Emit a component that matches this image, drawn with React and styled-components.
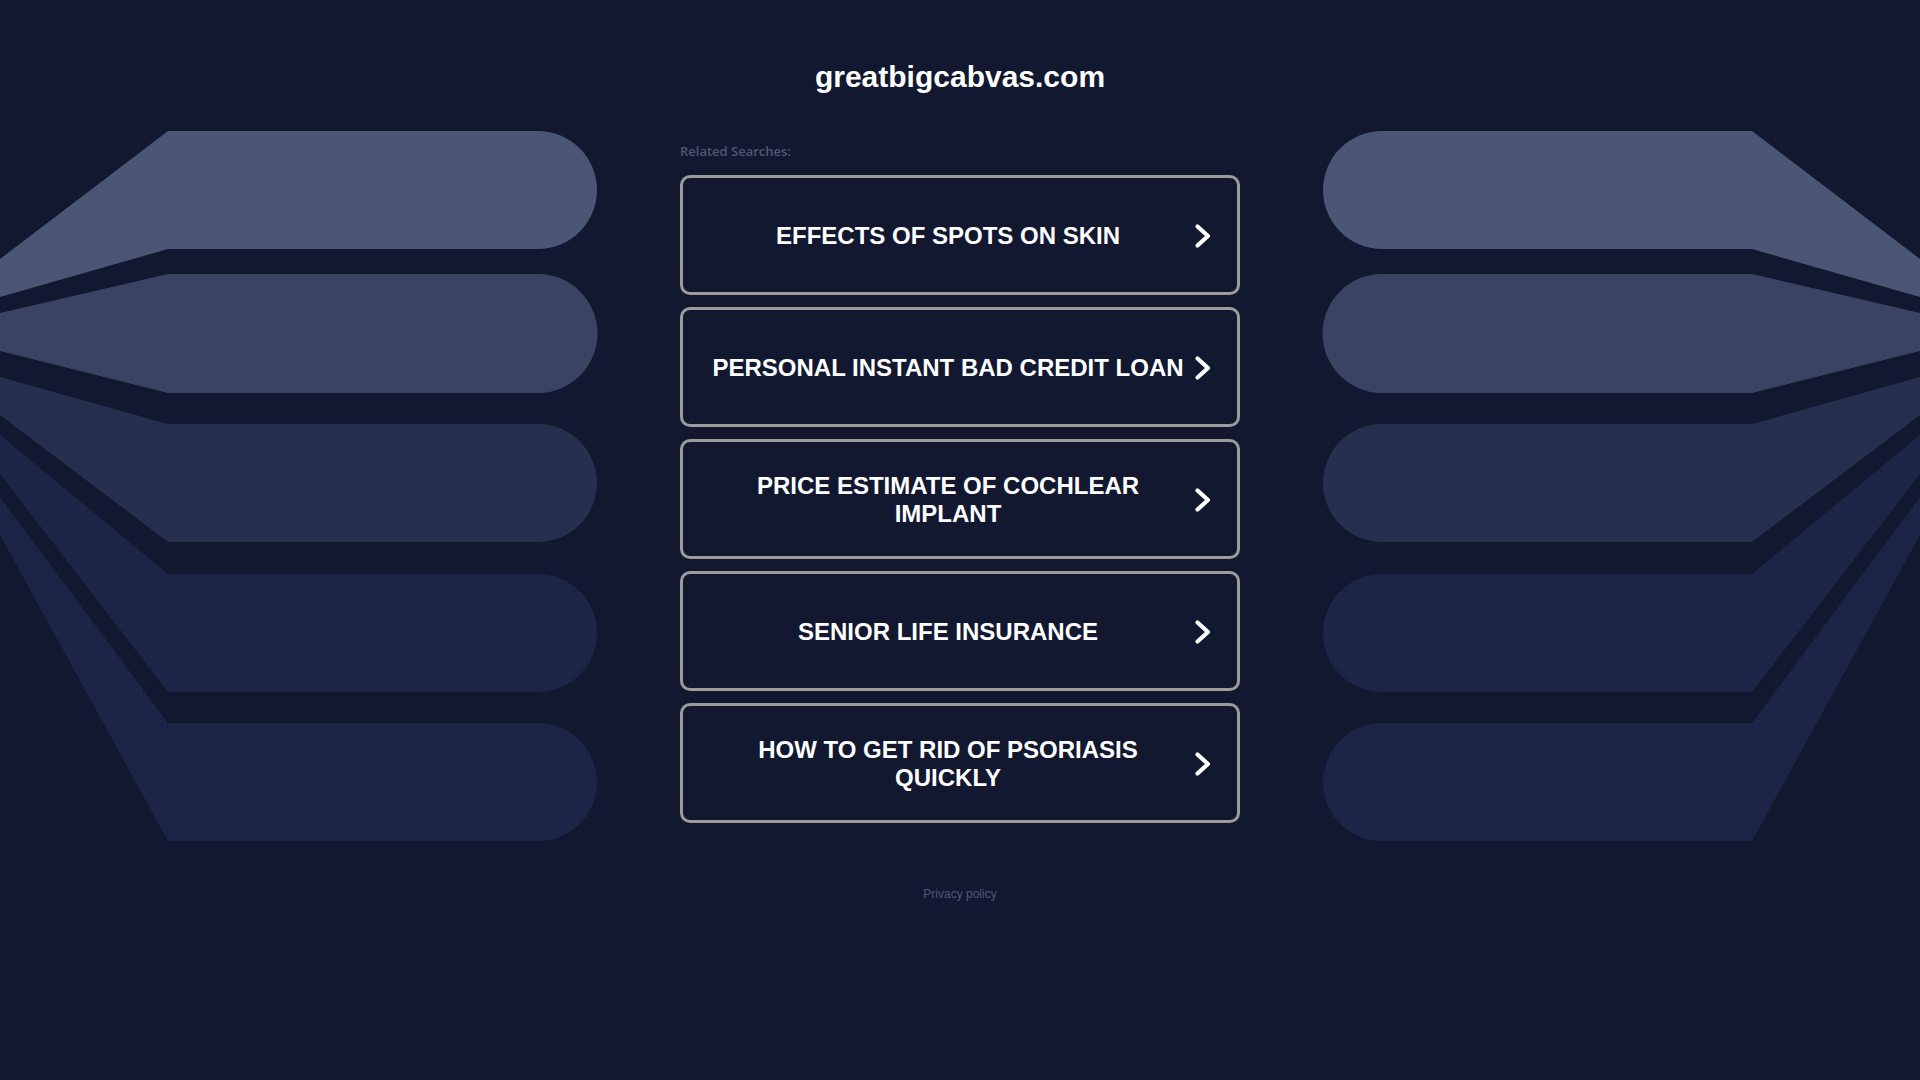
import React from "react";
import styled, { createGlobalStyle } from "styled-components";

const GlobalStyle = createGlobalStyle`
  html, body {
    margin: 0;
    padding: 0;
    background: #111830;
  }
`;

const Page = styled.div`
  position: relative;
  min-height: 1080px;
  overflow: hidden;
  background: #111830;
  font-family: "Liberation Sans", Arial, sans-serif;
`;

const Decor = styled.svg`
  position: absolute;
  top: 0;
  ${({ $side }) => ($side === "right" ? "right: 0; transform: scaleX(-1);" : "left: 0;")}
  width: 600px;
  height: 860px;
  z-index: 0;
`;

const Content = styled.div`
  position: relative;
  z-index: 1;
  display: flex;
  flex-direction: column;
  align-items: center;
  padding-top: 60px;
`;

const Title = styled.h1`
  margin: 0;
  font-size: 30px;
  line-height: 34px;
  font-weight: 700;
  color: #ffffff;
`;

const Column = styled.div`
  width: 560px;
  display: flex;
  flex-direction: column;
  margin-top: 49px;
`;

const Label = styled.div`
  font-family: "Open Sans", "Noto Sans", sans-serif;
  font-size: 13px;
  line-height: 16px;
  font-weight: 600;
  color: #4f5877;
  margin-bottom: 16px;
`;

const List = styled.div`
  display: flex;
  flex-direction: column;
  gap: 12px;
`;

const SearchLink = styled.a`
  box-sizing: border-box;
  height: 120px;
  display: flex;
  align-items: center;
  padding: 2px 24px 0 20px;
  border: 3px solid #9c9c9c;
  border-radius: 10px;
  background: #111830;
  text-decoration: none;
  cursor: pointer;
`;

const LinkText = styled.span`
  flex: 1;
  text-align: center;
  font-size: 24px;
  line-height: 28px;
  font-weight: 700;
  color: #ffffff;
  text-transform: uppercase;
`;

const Arrow = styled.svg`
  width: 20px;
  height: 28px;
  flex: none;
`;

const Footer = styled.a`
  margin-top: 64px;
  font-size: 12px;
  line-height: 14px;
  color: #4f5877;
  text-decoration: none;
`;

const searches = [
  "Effects of Spots on Skin",
  "Personal Instant Bad Credit Loan",
  "Price Estimate of Cochlear Implant",
  "Senior Life Insurance",
  "How to Get Rid of Psoriasis Quickly",
];

const bands = [
  { d: "M0,259 L168,131 L538,131 A59,59 0 0 1 538,249 L168,249 L0,297 Z", fill: "#4b5675" },
  { d: "M0,313 L168,274 L538,274 A59,59 0 0 1 538,393 L168,393 L0,351 Z", fill: "#3a4462" },
  { d: "M0,377 L168,424 L538,424 A59,59 0 0 1 538,542 L168,542 L0,415 Z", fill: "#262f4e" },
  { d: "M0,435 L168,574 L538,574 A59,59 0 0 1 538,692 L168,692 L0,474 Z", fill: "#1d2546", dots: true },
  { d: "M0,497 L168,723 L538,723 A59,59 0 0 1 538,841 L168,841 L0,535 Z", fill: "#1b2445", dots: true },
];

const Bands = ({ side }) => (
  <Decor $side={side} viewBox="0 0 600 860">
    <defs>
      <pattern id={`dots-${side}`} width="4" height="4" patternUnits="userSpaceOnUse">
        <circle cx="1" cy="1" r="0.6" fill="#2a3560" />
      </pattern>
    </defs>
    {bands.map((band, i) => (
      <g key={`band-${i}`}>
        <path d={band.d} fill={band.fill} />
        {band.dots && <path d={band.d} fill={`url(#dots-${side})`} opacity="0.6" />}
      </g>
    ))}
  </Decor>
);

const App = () => {
  return (
    <Page>
      <GlobalStyle />
      <Bands side="left" />
      <Bands side="right" />
      <Content>
        <Title>greatbigcabvas.com</Title>
        <Column>
          <Label>Related Searches:</Label>
          <List>
            {searches.map((item, idx) => (
              <SearchLink key={`search-${idx}`}>
                <LinkText>{item}</LinkText>
                <Arrow viewBox="0 0 20 28">
                  <path
                    d="M4.5 4.5 L15 14 L4.5 23.5"
                    fill="none"
                    stroke="#ffffff"
                    strokeWidth="4.2"
                    strokeLinecap="round"
                    strokeLinejoin="round"
                  />
                </Arrow>
              </SearchLink>
            ))}
          </List>
        </Column>
        <Footer>Privacy policy</Footer>
      </Content>
    </Page>
  );
};

export default App;
